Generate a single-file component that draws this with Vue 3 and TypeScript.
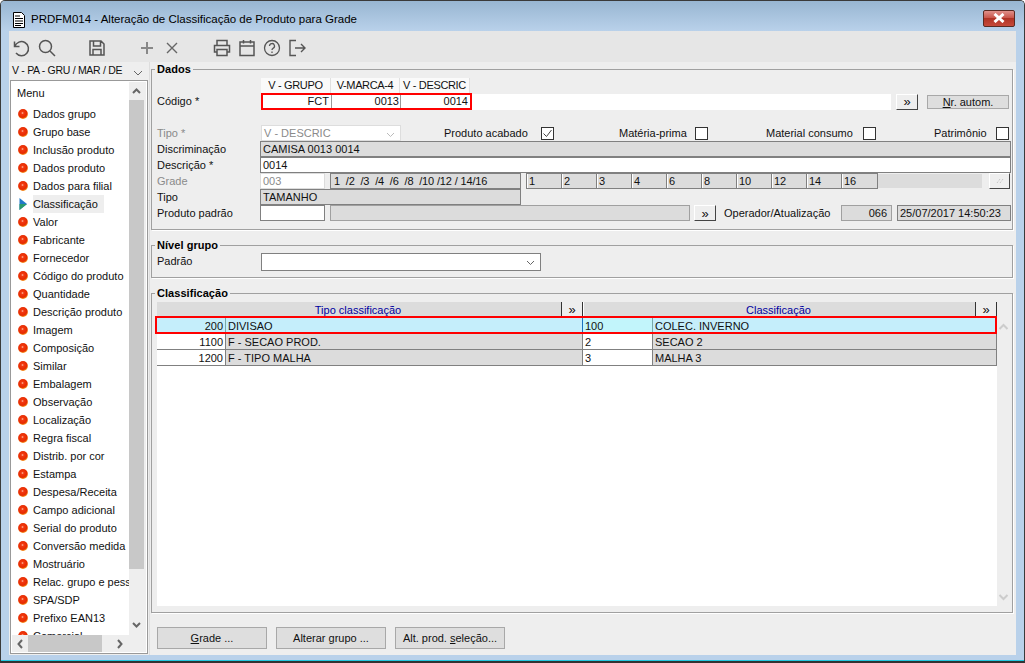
<script setup lang="ts">
const menu: string[] = ['Dados grupo','Grupo base','Inclusão produto','Dados produto','Dados para filial','Classificação','Valor','Fabricante','Fornecedor','Código do produto','Quantidade','Descrição produto','Imagem','Composição','Similar','Embalagem','Observação','Localização','Regra fiscal','Distrib. por cor','Estampa','Despesa/Receita','Campo adicional','Serial do produto','Conversão medida','Mostruário','Relac. grupo e pessoa','SPA/SDP','Prefixo EAN13','Comercial']
const gradeCells: string[] = ['1','2','3','4','6','8','10','12','14','16']
const rows = [
  { code: '200', name: 'DIVISAO', val: '100', desc: 'COLEC. INVERNO', sel: true },
  { code: '1100', name: 'F - SECAO PROD.', val: '2', desc: 'SECAO 2', sel: false },
  { code: '1200', name: 'F - TIPO MALHA', val: '3', desc: 'MALHA 3', sel: false },
]
</script>

<template>
  <div class="window">
    <header class="titlebar">
      <svg class="doc" width="14" height="16" viewBox="0 0 14 16"><path d="M1.500 .5h8l3 3v12h-11z" fill="#fff" stroke="#000"/><path d="M3 4h5M3 6.500h8M3 9h8M3 11.500h8M3 13.500h6" stroke="#000"/></svg>
      <span class="title">PRDFM014 - Alteração de Classificação de Produto para Grade</span>
      <button class="close"><svg width="14" height="10" viewBox="0 0 14 10"><path d="M2.500 1l9 8M11.500 1l-9 8" stroke="#fff" stroke-width="3"/></svg></button>
    </header>
    <div class="inner">
      <nav class="toolbar">
        <svg class="ic i1" width="20" height="20" viewBox="0 0 20 20"><path d="M3.500 3.500v5h5M3.800 8.500A7 7 0 1 1 5 15" fill="none" stroke="#555" stroke-width="1.500"/></svg>
        <svg class="ic i2" width="20" height="20" viewBox="0 0 20 20"><circle cx="8.500" cy="8.500" r="6" fill="none" stroke="#555" stroke-width="1.500"/><path d="M13 13l5 5" stroke="#555" stroke-width="1.500"/></svg>
        <svg class="ic i3" width="20" height="20" viewBox="0 0 20 20"><path d="M3 3h11l3 3v11H3zM6.500 3v5h7V3M6 17v-5.500h8V17" fill="none" stroke="#555" stroke-width="1.500"/></svg>
        <svg class="ic i4" width="18" height="18" viewBox="0 0 18 18"><path d="M9 3v12M3 9h12" stroke="#888" stroke-width="2"/></svg>
        <svg class="ic i5" width="18" height="18" viewBox="0 0 18 18"><path d="M4 4l10 10M14 4L4 14" stroke="#666" stroke-width="1.400"/></svg>
        <svg class="ic i6" width="20" height="20" viewBox="0 0 20 20"><path d="M5 7V2.500h10V7M5 14H2.500V7.500h15V14H15M5 11.500h10v6H5z" fill="none" stroke="#555" stroke-width="1.500"/></svg>
        <svg class="ic i7" width="20" height="20" viewBox="0 0 20 20"><path d="M3 4h14v13.500H3zM3 8h14M6.500 2v3.500M13.500 2v3.500" fill="none" stroke="#555" stroke-width="1.500"/></svg>
        <svg class="ic i7" width="20" height="20" viewBox="0 0 20 20"><circle cx="10" cy="10" r="7.500" fill="none" stroke="#555" stroke-width="1.300"/><path d="M7.500 8a2.500 2.500 0 1 1 3.500 2.300c-.8.4-1 .9-1 1.700" fill="none" stroke="#555" stroke-width="1.300"/><path d="M10 13.500v1.500" stroke="#555" stroke-width="1.300"/></svg>
        <svg class="ic i7" width="20" height="20" viewBox="0 0 20 20"><path d="M9 2.500H3v15h6M8 10h10M14 6l4 4-4 4" fill="none" stroke="#555" stroke-width="1.400"/></svg>
      </nav>
      <div class="main">
        <aside class="side">
          <div class="sideselect"><span>V - PA - GRU / MAR / DE</span><svg width="10" height="6" viewBox="0 0 10 6"><path d="M1 1l4 4 4-4" fill="none" stroke="#666"/></svg></div>
          <div class="menubox">
            <div class="menuarea">
              <div class="menulist">
                <div class="menuhead">Menu</div>
                <div v-for="m in menu" :key="m" class="menuitem">
                  <svg v-if="m === 'Classificação'" width="10" height="14" viewBox="0 0 10 14"><path d="M1.500 1l7.500 6-7.500 6z" fill="#2179c9"/><path d="M1.500 7H9l-7.500 6z" fill="#2a9a6b"/></svg>
                  <svg v-else width="10" height="10" viewBox="0 0 10 10"><defs><radialGradient id="ball" cx=".45" cy=".4" r=".62"><stop offset="0" stop-color="#ffc8b0"/><stop offset=".22" stop-color="#f23a10"/><stop offset=".72" stop-color="#e52a00"/><stop offset="1" stop-color="#f9a828"/></radialGradient></defs><circle cx="5" cy="5" r="4.900" fill="url(#ball)"/></svg>
                  <span :class="{ current: m === 'Classificação' }">{{ m }}</span>
                </div>
              </div>
              <div class="vscroll">
                <svg width="15" height="18" viewBox="0 0 15 18"><path d="M4 11l3.500-3.500L11 11" fill="none" stroke="#666" stroke-width="2"/></svg>
                <div class="vthumb"></div>
                <svg class="bottomarrow" width="15" height="18" viewBox="0 0 15 18"><path d="M4 7l3.500 3.500L11 7" fill="none" stroke="#666" stroke-width="2"/></svg>
              </div>
            </div>
            <div class="hscroll">
              <svg width="16" height="16" viewBox="0 0 16 16"><path d="M10 4L6.500 8l3.500 4" fill="none" stroke="#666" stroke-width="2"/></svg>
              <div class="hthumb"></div>
              <svg width="16" height="16" viewBox="0 0 16 16"><path d="M6 4l3.500 4L6 12" fill="none" stroke="#666" stroke-width="2"/></svg>
            </div>
          </div>
        </aside>
        <section class="content">
          <fieldset class="fs dados">
            <legend>Dados</legend>
            <div class="codehead"><span class="lab"></span><span class="ch w70">V - GRUPO</span><span class="ch w69">V-MARCA-4</span><span class="ch w70">V - DESCRIC</span></div>
            <div class="r coderow">
              <span class="lab">Código *</span>
              <div class="redbox"><span class="cc w69b first">FCT</span><span class="cc w69b">0013</span><span class="cc w69c">0014</span></div>
              <div class="codefill"></div>
              <button class="dbl b22">»</button>
              <button class="nr"><u>N</u>r. autom.</button>
            </div>
            <div class="r tiporow">
              <span class="lab dim">Tipo *</span>
              <div class="tiposel"><span>V - DESCRIC</span><svg width="9" height="6" viewBox="0 0 9 6"><path d="M1 1l3.500 3.500L8 1" fill="none" stroke="#bbb"/></svg></div>
              <span class="ck ck1">Produto acabado</span><span class="box"><svg width="13" height="13" viewBox="0 0 13 13"><path d="M2.500 6.500l3 3 5-6.500" fill="none" stroke="#444"/></svg></span>
              <span class="ck ck2">Matéria-prima</span><span class="box"></span>
              <span class="ck ck3">Material consumo</span><span class="box"></span>
              <span class="ck ck4">Patrimônio</span><span class="box"></span>
            </div>
            <div class="r h16"><span class="lab">Discriminação</span><div class="f gray grow">CAMISA 0013 0014</div></div>
            <div class="r h16"><span class="lab">Descrição *</span><div class="f white grow">0014</div></div>
            <div class="r h16">
              <span class="lab dim">Grade</span>
              <div class="f lightf w65">003</div>
              <div class="f gray gradetxt">1 &nbsp;/2 &nbsp;/3 &nbsp;/4 &nbsp;/6 &nbsp;/8 &nbsp;/10 /12 / 14/16</div>
              <div class="cells"><span v-for="c in gradeCells" :key="c" class="cell">{{ c }}</span></div>
              <div class="strip"></div>
              <button class="tinybtn"><svg width="10" height="8" viewBox="0 0 10 8"><path d="M2 6l3-4M5 6l3-4" stroke="#bbb" stroke-dasharray="1 1"/></svg></button>
            </div>
            <div class="r h16"><span class="lab">Tipo</span><div class="f gray w261">TAMANHO</div></div>
            <div class="r h16">
              <span class="lab">Produto padrão</span>
              <div class="f white w65"></div>
              <div class="f gray pp"></div>
              <button class="dbl b22 pbtn">»</button>
              <span class="opl">Operador/Atualização</span>
              <div class="f gray op">066</div>
              <div class="f gray dt">25/07/2017 14:50:23</div>
            </div>
          </fieldset>
          <fieldset class="fs nivel">
            <legend>Nível grupo</legend>
            <div class="r padrao"><span class="lab padlab">Padrão</span><div class="padsel"><svg width="9" height="6" viewBox="0 0 9 6"><path d="M1 1l3.500 3.500L8 1" fill="none" stroke="#666"/></svg></div></div>
          </fieldset>
          <fieldset class="fs classif">
            <legend>Classificação</legend>
            <div class="tablewrap">
              <div class="table">
                <div class="thead">
                  <div class="th th1"><span>Tipo classificação</span><button class="dbl thb">»</button></div>
                  <div class="th th2"><span>Classificação</span><button class="dbl thb">»</button></div>
                </div>
                <div v-for="r in rows" :key="r.code" class="tr" :class="{ sel: r.sel }">
                  <div class="td num">{{ r.code }}</div>
                  <div class="td g">{{ r.name }}</div>
                  <div class="td val">{{ r.val }}</div>
                  <div class="td g">{{ r.desc }}</div>
                </div>
              </div>
              <div class="tscroll">
                <svg width="13" height="12" viewBox="0 0 13 12"><path d="M2.500 8l4-4 4 4" fill="none" stroke="#ccc" stroke-width="2"/></svg>
                <svg width="13" height="12" viewBox="0 0 13 12"><path d="M2.500 4l4 4 4-4" fill="none" stroke="#ccc" stroke-width="2"/></svg>
              </div>
            </div>
          </fieldset>
          <div class="actions">
            <button class="act"><u>G</u>rade ...</button>
            <button class="act">Alterar <u>g</u>rupo ...</button>
            <button class="act">Alt. prod. <u>s</u>eleção...</button>
          </div>
        </section>
      </div>
    </div>
  </div>
</template>

<style>
html, body { margin: 0; background: #fff; overflow: hidden; }
</style>

<style scoped>
* { box-sizing: border-box; }
.window {
  width: 1025px; height: 663px; display: flex; flex-direction: column; overflow: hidden;
  background: #b9d1ea; border: 1px solid #3a3a3a; border-bottom: 2px solid #333; border-radius: 5px 5px 0 0;
  padding: 0 8px 6px 8px; font: 11px/13px "Liberation Sans", Arial, sans-serif; color: #111;
  box-shadow: inset 0 -1px 0 #22c8e0;
}
.titlebar { height: 30px; flex: none; display: flex; align-items: center; margin: 0 -8px; padding: 7px 9px 0 11px;
  background: linear-gradient(#98b6d2, #b9d1ea); }
.doc { flex: none; margin-right: 5px; }
.title { font-size: 11.5px; flex: 1; color: #000; }
.close { width: 32px; height: 17px; border: 1px solid #5a2a22; border-radius: 2px; padding: 0; display: flex; align-items: center; justify-content: center; margin-top: -3px;
  background: linear-gradient(#e0908a 0, #c9574c 45%, #b03325 50%, #c6493a 100%); }
.inner { flex: 1; min-height: 0; display: flex; flex-direction: column; background: #eeeeee; }
.toolbar { height: 31px; flex: none; background: #e6e6e6; display: flex; align-items: center; padding-top: 3px; }
.ic { flex: none; }
.i1 { margin-left: 2px; } .i2 { margin-left: 6px; } .i3 { margin-left: 30px; } .i4 { margin-left: 31px; } .i5 { margin-left: 7px; } .i6 { margin-left: 31px; } .i7 { margin-left: 5px; }
.main { flex: 1; min-height: 0; display: flex; }
.side { width: 141px; flex: none; padding-right: 1px; display: flex; flex-direction: column; border-right: 1px solid #ddd; }
.sideselect { height: 16px; padding: 1px 5px 0 3px; display: flex; align-items: center; justify-content: space-between; font-size: 10.5px; letter-spacing: -.3px; white-space: nowrap; }
.sideselect svg { margin-top: 4px; }
.menubox { margin: 2px 0 1px 1px; flex: 1; min-height: 0; border: 1px solid #999; padding: 1px; box-shadow: 0 0 0 1px #fff inset; display: flex; flex-direction: column; width: 138px; }
.menuarea { flex: 1; min-height: 0; display: flex; overflow: hidden; }
.menulist { width: 117px; flex: none; background: #fff; overflow: hidden; white-space: nowrap; padding-top: 4px; }
.menuhead { height: 19px; padding: 1px 0 0 5px; display: flex; align-items: flex-start; }
.menuitem { height: 18px; display: flex; align-items: center; padding-left: 6px; gap: 5px; }
.menuitem svg { flex: none; }
.menuitem span { line-height: 18px; }
.menuitem .current { background: #eeeeee; padding: 0 6px 0 0; }
.vscroll { width: 15px; background: #eee; display: flex; flex-direction: column; }
.vthumb { height: 469px; background: #c8c8c8; }
.bottomarrow { margin-top: auto; margin-bottom: 1px; }
.hscroll { height: 17px; flex: none; display: flex; align-items: center; background: #eee; }
.hthumb { width: 74px; height: 17px; background: #c8c8c8; margin-right: 10px; }
.content { flex: 1; min-width: 0; padding: 1px 3px 0 1px; display: flex; flex-direction: column; }
.fs { margin: 0; padding: 0 0 0 5px; border: 1px solid #a0a0a0; box-shadow: 1px 1px 0 #fff; min-width: 0; }
.fs legend { padding: 0 2px; margin-left: -2px; font-weight: bold; line-height: 12px; font-size: 11px; color: #000; letter-spacing: .05px; }
.dados { height: 167px; }
.nivel { height: 39px; margin-top: 9px; }
.classif { height: 326px; margin-top: 9px; }
.r { display: flex; align-items: center; }
.lab { width: 104px; flex: none; white-space: nowrap; }
.dim { color: #8a8a8a; }
.codehead { display: flex; height: 15px; margin-top: 3px; }
.ch { height: 15px; background: #fafafa; text-align: center; line-height: 15px; border-right: 1px solid #e0e0e0; letter-spacing: -.35px; }
.w70 { width: 70px; } .w69 { width: 69px; }
.coderow { height: 17px; }
.redbox { display: flex; width: 211px; height: 17px; border: 2px solid #f00; background: #fff; flex: none; }
.cc { height: 13px; text-align: right; padding-right: 1px; line-height: 13px; border-right: 1px solid #999; }
.first { padding-right: 2px; }
.w69b { width: 69px; } .w69c { flex: 1; border-right: 0; padding-right: 2px; }
.codefill { width: 419px; height: 16px; margin-top: 1px; background: #fff; flex: none; margin-right: 5px; }
.dbl { padding: 0; background: #eee; border: 0; border-top: 1px solid #fff; border-left: 1px solid #fff; border-right: 1px solid #444; border-bottom: 1px solid #444; font: 13px/11px "Liberation Sans", sans-serif; color: #111; }
.b22 { width: 22px; height: 16px; flex: none; }
.nr { width: 82px; height: 14px; flex: none; margin-left: 9px; background: #dedede; border: 1px solid #a8a8a8; padding: 0; font: inherit; color: #111; line-height: 12px; }
.tiporow { height: 16px; margin-top: 15px; }
.tiposel { width: 140px; height: 16px; flex: none; background: #fff; border: 1px solid #ddd; color: #8a8a8a; padding: 0 5px 0 2px; display: flex; align-items: center; justify-content: space-between; margin-right: 43px; }
.tiposel svg { margin-top: 4px; }
.ck { white-space: nowrap; flex: none; }
.ck1 { width: 97px; } .ck2 { margin-left: 65px; width: 76px; } .ck3 { margin-left: 58px; width: 97px; } .ck4 { margin-left: 58px; width: 62px; }
.box { width: 13px; height: 13px; flex: none; background: #fff; border: 1px solid #333; display: block; line-height: 0; }
.box svg { margin: -1px; }
.h16 { height: 16px; }
.f { height: 16px; border: 1px solid #808080; padding-left: 2px; line-height: 14px; white-space: nowrap; flex: none; }
.gray { background: #dcdcdc; }
.white { background: #fff; }
.grow { width: 751px; margin-left: -1px; }
.lightf { background: #fff; border-color: #dcdcdc; color: #8a8a8a; }
.w65 { width: 65px; margin-left: -1px; }
.gradetxt { width: 191px; margin-left: 5px; padding-left: 3px; letter-spacing: -.15px; }
.cells { display: flex; margin-left: 5px; flex: none; border: 1px solid #808080; height: 16px; width: 352px; }
.cell { width: 35px; background: #dcdcdc; border-right: 1px solid #808080; padding-left: 1px; line-height: 14px; border-left: 1px solid #fff; }
.cell:last-child { border-right: 0; }
.strip { width: 104px; height: 14px; background: #dcdcdc; flex: none; }
.tinybtn { width: 21px; height: 16px; margin-left: 7px; padding: 0; flex: none; background: #eee; border: 0; border-right: 1px solid #444; border-bottom: 1px solid #444; border-top: 1px solid #fff; border-left: 1px solid #fff; display: flex; align-items: center; justify-content: center; }
.w261 { width: 261px; margin-left: -1px; }
.pp { width: 360px; margin-left: 5px; border-color: #a0a0a0; }
.pbtn { margin-left: 4px; }
.opl { margin-left: 8px; width: 117px; flex: none; white-space: nowrap; }
.op { width: 51px; text-align: right; padding-right: 4px; border-color: #a0a0a0; }
.dt { width: 114px; margin-left: 5px; }
.padrao { height: 18px; margin-top: 2px; }
.padlab { margin-top: -2px; }
.padsel { width: 280px; height: 18px; flex: none; background: #fff; border: 1px solid #808080; display: flex; align-items: center; justify-content: flex-end; padding: 2px 5px 0 0; }
.tablewrap { display: flex; margin-top: 3px; }
.table { width: 840px; height: 304px; background: #fff; flex: none; }
.thead { display: flex; height: 15px; background: #dcdcdc; }
.th { display: flex; color: #0000a0; line-height: 16px; text-align: center; }
.th span { flex: 1; padding-right: 2px; }
.th1 { width: 426px; } .th2 { width: 414px; border-left: 1px solid #fff; }
.thb { width: 22px; height: 15px; flex: none; border-left: 1px solid #333; border-right: 1px solid #333; border-top: 0; border-bottom: 0; background: #eee; color: #111; }
.tr { display: grid; grid-template-columns: 69px 357px 70px 344px; grid-template-rows: 15px; height: 16px; border-bottom: 1px solid #808080; }
.tr.sel { background: #c5eefb; position: relative; height: 17px; grid-template-rows: 17px; border-bottom: 0; }
.tr.sel::after { content: ""; position: absolute; inset: -1px 0 0 -2px; border: 2px solid #f00; }
.td { height: 15px; line-height: 16px; padding-left: 2px; border-right: 1px solid #808080; white-space: nowrap; }
.sel .td { height: 17px; line-height: 18px; }
.td.num { text-align: right; padding-right: 2px; background: #fff; }
.td.g { background: #dcdcdc; }
.td.val { background: #fff; }
.sel .td.num, .sel .td.g { background: #c5eefb; }
.sel .td.val { background: #c2f5fb; border-left: 1px solid #1a73c0; margin-left: -1px; }
.sel .td { border-right-color: #7aa; }
.tscroll { width: 14px; height: 304px; display: flex; flex-direction: column; justify-content: space-between; padding: 19px 0 3px; flex: none; }
.actions { display: flex; gap: 9px; padding: 14px 0 0 6px; }
.act { width: 110px; height: 22px; background: #dedede; border: 1px solid #a8a8a8; padding: 0; font: inherit; color: #111; }
</style>
